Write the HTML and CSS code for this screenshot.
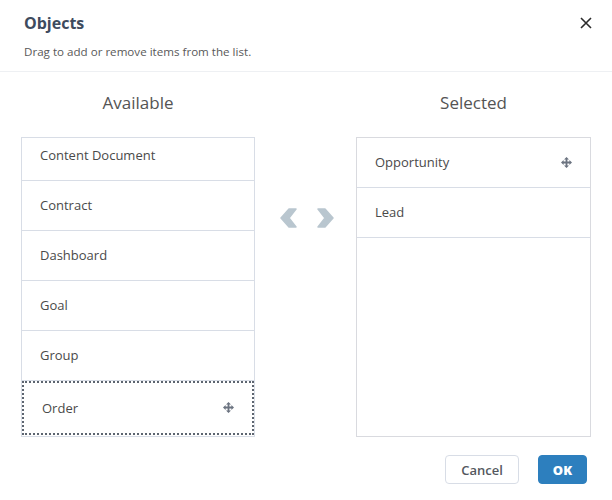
FILE: index.html
```html
<!DOCTYPE html>
<html>
<head>
<meta charset="utf-8">
<link rel="stylesheet" href="styles.css">
</head>
<body>
<div class="dialog">
  <header class="header">
    <div class="header-text">
      <h2 class="title">Objects</h2>
      <p class="subtitle">Drag to add or remove items from the list.</p>
    </div>
    <button class="close" aria-label="Close">
      <svg width="12" height="12" viewBox="0 0 12 12"><path d="M1 1 L11 11 M11 1 L1 11" stroke="#2b2b2b" stroke-width="1.6" fill="none"/></svg>
    </button>
  </header>
  <main class="body">
    <section class="column">
      <h3 class="col-title">Available</h3>
      <ul class="list list-available">
        <li class="item item-first">Content Document</li>
        <li class="item">Contract</li>
        <li class="item">Dashboard</li>
        <li class="item">Goal</li>
        <li class="item">Group</li>
        <li class="item item-drag"><span>Order</span>
          <svg class="move" width="11" height="11" viewBox="0 0 11 11"><path d="M5.5 0 L8 2.6 H6.4 V4.6 H8.4 V3 L11 5.5 L8.4 8 V6.4 H6.4 V8.4 H8 L5.5 11 L3 8.4 H4.6 V6.4 H2.6 V8 L0 5.5 L2.6 3 V4.6 H4.6 V2.6 H3 Z" fill="#6b7380"/></svg>
        </li>
      </ul>
    </section>
    <div class="arrows">
      <svg width="17" height="20" viewBox="0 0 17 20"><polygon points="9,1 16,1 9,10 16,19 9,19 1,10" fill="#b9c6cf" stroke="#b9c6cf" stroke-width="1.5" stroke-linejoin="round"/></svg>
      <svg width="17" height="20" viewBox="0 0 17 20"><polygon points="1,1 8,1 16,10 8,19 1,19 8,10" fill="#b9c6cf" stroke="#b9c6cf" stroke-width="1.5" stroke-linejoin="round"/></svg>
    </div>
    <section class="column">
      <h3 class="col-title">Selected</h3>
      <ul class="list list-selected">
        <li class="item"><span>Opportunity</span>
          <svg class="move" width="11" height="11" viewBox="0 0 11 11"><path d="M5.5 0 L8 2.6 H6.4 V4.6 H8.4 V3 L11 5.5 L8.4 8 V6.4 H6.4 V8.4 H8 L5.5 11 L3 8.4 H4.6 V6.4 H2.6 V8 L0 5.5 L2.6 3 V4.6 H4.6 V2.6 H3 Z" fill="#6b7380"/></svg>
        </li>
        <li class="item">Lead</li>
      </ul>
    </section>
  </main>
  <footer class="footer">
    <button class="btn btn-neutral">Cancel</button>
    <button class="btn btn-brand">OK</button>
  </footer>
</div>
</body>
</html>
```
FILE: styles.css
```css
* { box-sizing: border-box; }
html, body { margin: 0; padding: 0; background: #fff; }
body {
  font-family: "Open Sans", Lato, "Liberation Sans", sans-serif;
  color: #4a4a4a;
  width: 612px;
}
.dialog { width: 612px; }
.header {
  display: flex;
  justify-content: space-between;
  align-items: flex-start;
  padding: 13px 20px 11px 24px;
  border-bottom: 1px solid #eef0f3;
}
.title {
  margin: 0;
  font-size: 16px;
  line-height: 20px;
  font-weight: 700;
  color: #3e4b5e;
}
.subtitle {
  margin: 11px 0 0;
  font-size: 11.6px;
  line-height: 16px;
  color: #595959;
}
.close {
  border: 0;
  background: none;
  padding: 0;
  margin-top: 4px;
  width: 12px;
  height: 12px;
  display: flex;
}
.body {
  display: flex;
  padding: 21px 21px 0 21px;
}
.column { display: flex; flex-direction: column; }
.column:first-child { width: 234px; }
.column:last-child { width: 235px; }
.col-title {
  margin: 0 0 24px;
  text-align: center;
  font-size: 17px;
  line-height: 20px;
  font-weight: 400;
  color: #545454;
}
.list {
  list-style: none;
  margin: 0;
  padding: 0;
  height: 300px;
  border: 1px solid #d8dde6;
  overflow: hidden;
}
.list-selected { border-color: #d9dadf; }
.item {
  height: 50px;
  display: flex;
  align-items: center;
  justify-content: space-between;
  padding: 0 18px 1px;
  font-size: 13px;
  color: #4a4a4a;
  border-bottom: 1px solid #d8dde6;
}
.item-first { height: 43px; padding-bottom: 8px; }
.item-drag {
  height: 54px;
  border: 2px dotted #5d6570;
  padding: 0 18px 1px 18px;
}
.move { display: block; }
.arrows {
  flex: 1;
  display: flex;
  justify-content: center;
  gap: 20px;
  padding-top: 115px;
  padding-left: 2px;
}
.footer {
  display: flex;
  justify-content: flex-end;
  gap: 19px;
  padding: 18px 25px 0 0;
}
.btn {
  height: 29px;
  border-radius: 4px;
  font-family: "Open Sans", Lato, "Liberation Sans", sans-serif;
  font-size: 13px;
  font-weight: 600;
  padding: 0;
}
.btn-neutral {
  width: 74px;
  background: #fff;
  border: 1px solid #d8dde6;
  color: #54585e;
}
.btn-brand {
  width: 49px;
  background: #2d7fbe;
  border: 1px solid #2d7fbe;
  color: #fff;
  font-weight: 800;
}
```
